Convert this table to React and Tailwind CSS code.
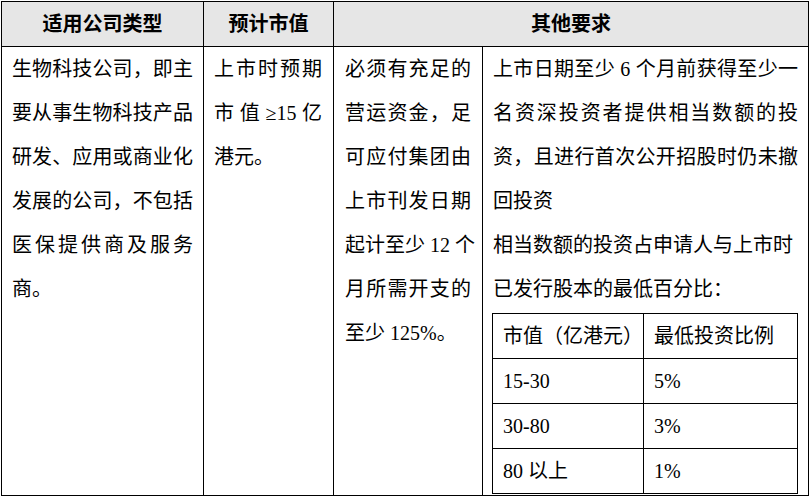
const font = "font-['Liberation_Serif','Noto_Sans_CJK_SC',serif]";

// one rendered line of a cell; full lines are spread to the cell width
const Line = ({ text, full = true }) => (
  <div className={full ? 'text-justify [text-align-last:justify] whitespace-nowrap' : 'whitespace-nowrap'}>
    {text}
  </div>
);

const Cell = ({ lines, className = '' }) => (
  <div className={`leading-[44px] ${className}`}>
    {lines.map((l, i) => (
      <Line key={i} text={l} full={i < lines.length - 1} />
    ))}
  </div>
);

const ratios = [
  ['市值（亿港元）', '最低投资比例'],
  ['15-30', '5%'],
  ['30-80', '3%'],
  ['80 以上', '1%'],
];

export default function App() {
  return (
    <div className={`w-[809px] h-[497px] bg-white text-black text-[20px] ${font}`}>
      <div className="ml-px mt-px w-[808px] border border-black">
        {/* Header */}
        <div className="flex h-[45px] bg-[#e6e6e6] border-b border-black font-bold">
          <div className="w-[202px] border-r border-black flex items-center justify-center">适用公司类型</div>
          <div className="w-[130px] border-r border-black flex items-center justify-center">预计市值</div>
          <div className="flex-1 flex items-center justify-center">其他要求</div>
        </div>

        {/* Body */}
        <div className="flex h-[448px]">
          <div className="w-[202px] border-r border-black pl-[10px] pr-[10px]">
            <Cell
              lines={[
                '生物科技公司，即主',
                '要从事生物科技产品',
                '研发、应用或商业化',
                '发展的公司，不包括',
                '医保提供商及服务',
                '商。',
              ]}
            />
          </div>
          <div className="w-[130px] border-r border-black pl-[10px] pr-[11px]">
            <Cell lines={['上市时预期', '市 值 ≥15 亿', '港元。']} />
          </div>
          <div className="w-[149px] border-r border-black pl-[11px] pr-[11px]">
            <Cell
              lines={[
                '必须有充足的',
                '营运资金，足',
                '可应付集团由',
                '上市刊发日期',
                '起计至少 12 个',
                '月所需开支的',
                '至少 125%。',
              ]}
            />
          </div>
          <div className="flex-1 pl-[10px] pr-[10px]">
            <Cell
              lines={[
                '上市日期至少 6 个月前获得至少一',
                '名资深投资者提供相当数额的投',
                '资，且进行首次公开招股时仍未撤',
                '回投资',
              ]}
            />
            <div className="leading-[44px]">
              <div className="whitespace-nowrap">相当数额的投资占申请人与上市时</div>
              <div className="whitespace-nowrap">已发行股本的最低百分比：</div>
            </div>

            {/* minimum investment table */}
            <div className="mt-[2px] ml-[-1px] w-[306px] border border-black">
              {ratios.map((r, i) => (
                <div key={i} className={i > 0 ? 'flex h-[45px] border-t border-black' : 'flex h-[44px]'}>
                  <div className="w-[151px] border-r border-black pl-[10px] flex items-center whitespace-nowrap">{r[0]}</div>
                  <div className="flex-1 pl-[10px] flex items-center whitespace-nowrap">{r[1]}</div>
                </div>
              ))}
            </div>
          </div>
        </div>
      </div>
    </div>
  );
}
